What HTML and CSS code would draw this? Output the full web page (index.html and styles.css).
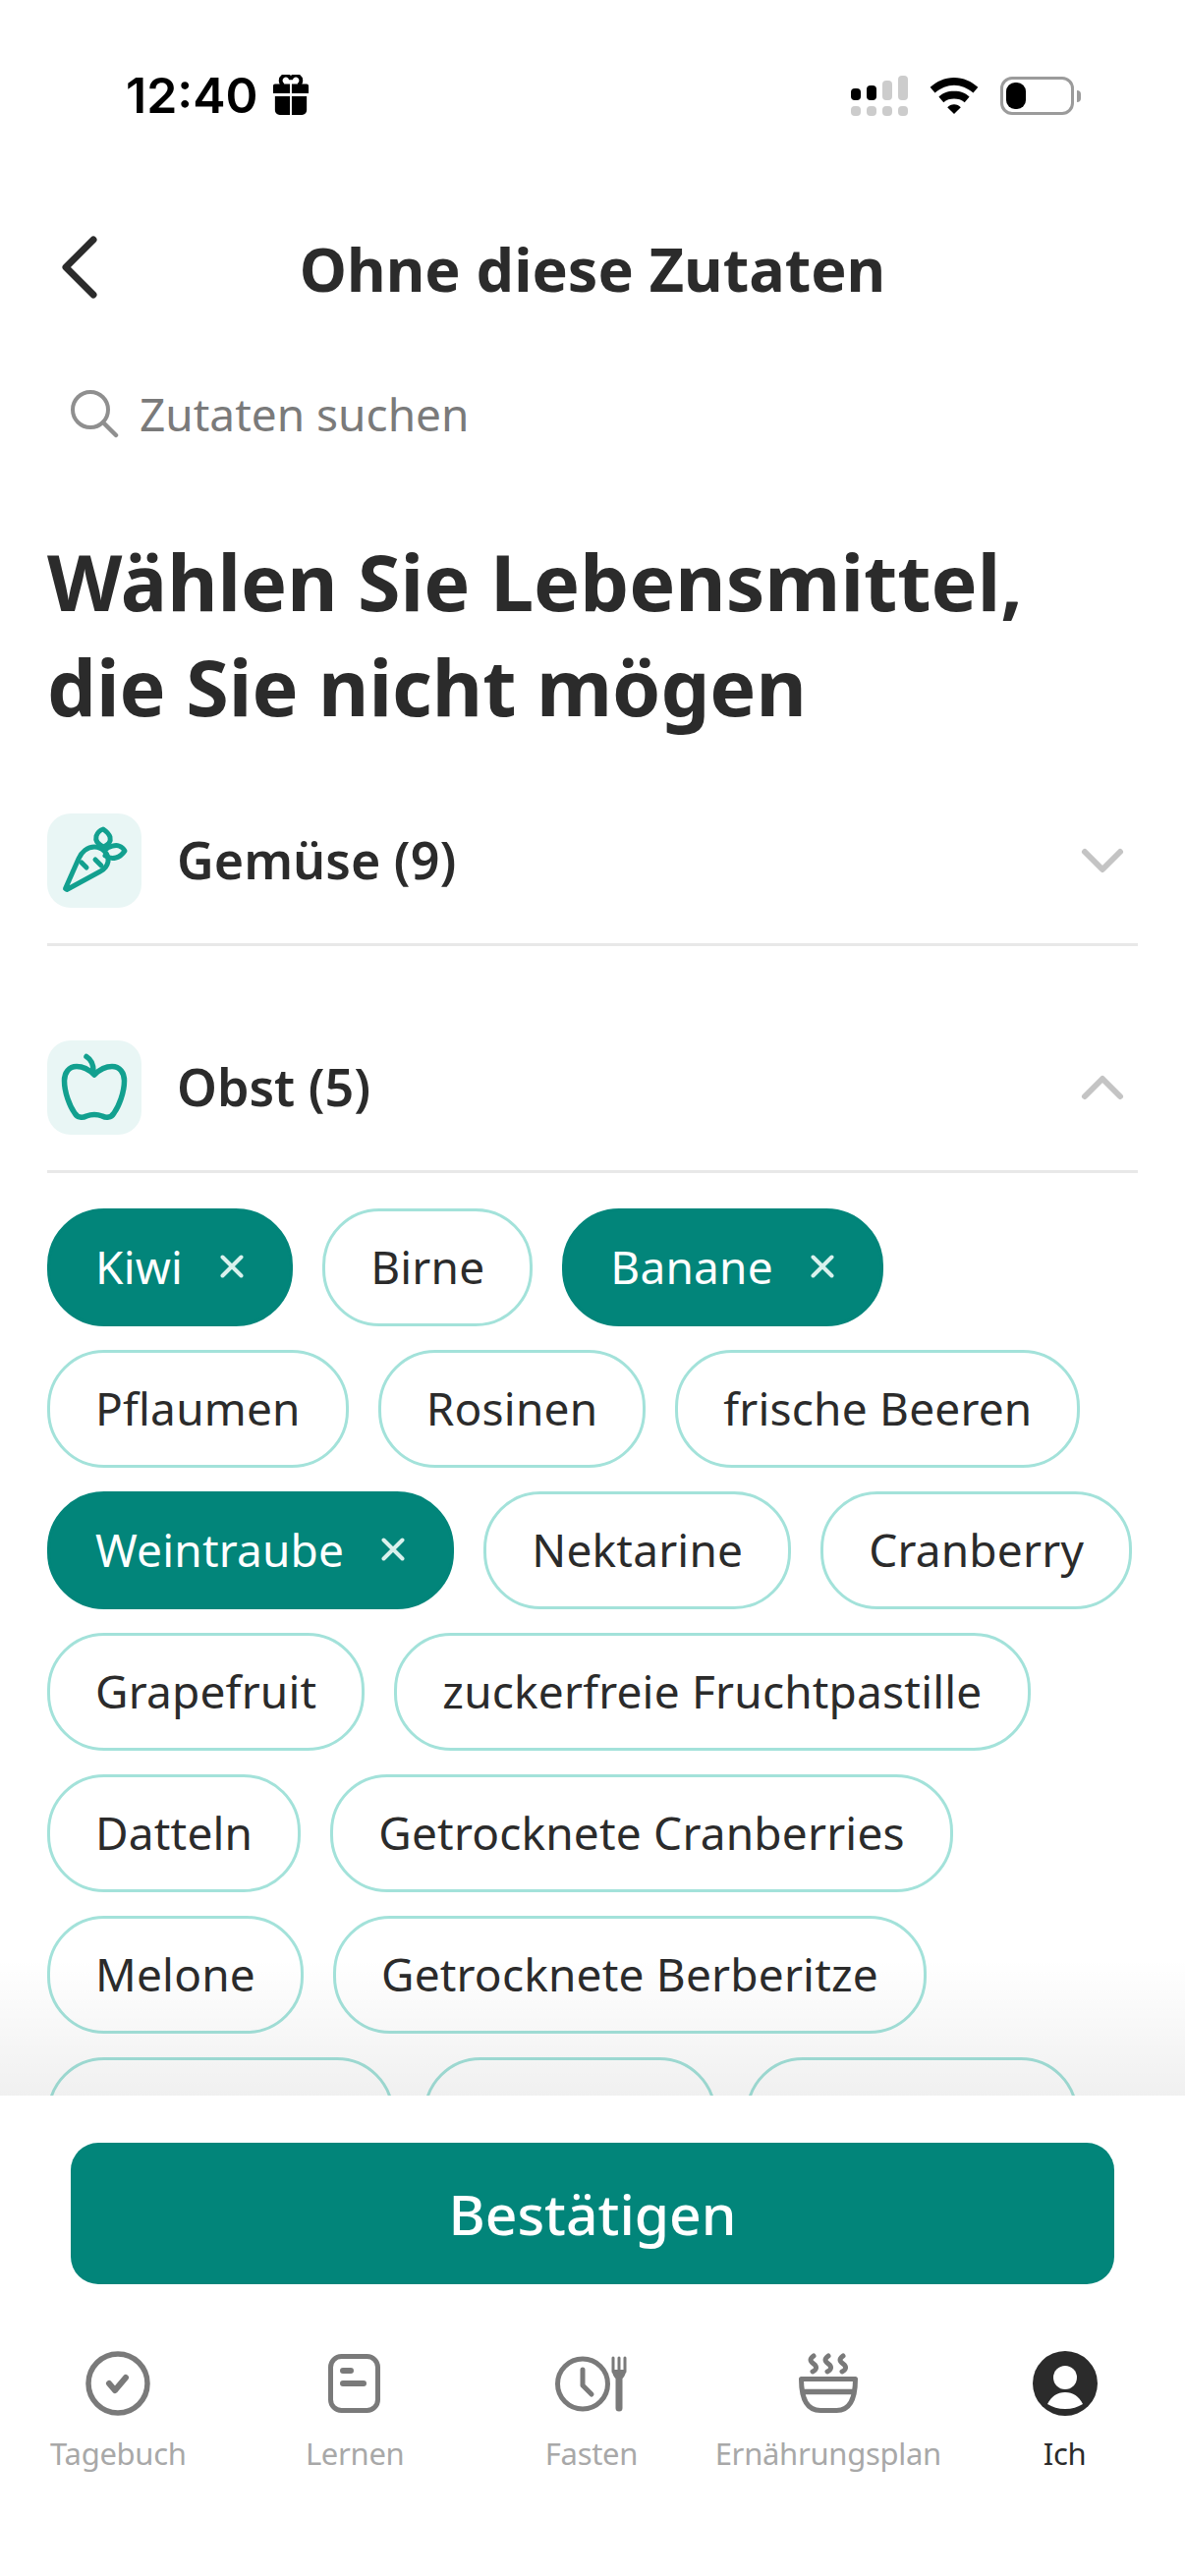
FILE: index.html
```html
<!DOCTYPE html>
<html lang="de">
<head>
    <meta charset="UTF-8">
    <meta name="viewport" content="width=device-width, initial-scale=1.0">
    <title>Ohne diese Zutaten</title>
    <link rel="stylesheet" href="styles.css">
</head>
<body>
    <div class="screen">
        <div class="status-bar">
            <div class="status-left">
                <span class="time">12:40</span>
                <svg class="gift" viewBox="0 0 40 44" width="38" height="42">
                    <path d="M12 11a5.500 5.500 0 1 1 8-6 5.500 5.500 0 1 1 8 6" fill="none" stroke="#000" stroke-width="4"/>
                    <path d="M3 10h16v10H1V12a2 2 0 0 1 2-2zM21 10h16a2 2 0 0 1 2 2v8H21zM3 23h16v20H8a5 5 0 0 1-5-5zM21 23h16v15a5 5 0 0 1-5 5H21z"/>
                </svg>
            </div>
            <div class="status-right">
                <svg viewBox="0 0 58 41" width="58" height="41">
                    <rect x="0" y="13" width="10" height="12" rx="4"/>
                    <rect x="16" y="10" width="10" height="15" rx="4"/>
                    <rect x="32" y="5" width="10" height="20" rx="4" fill="#ccc"/>
                    <rect x="48" y="0" width="10" height="25" rx="4" fill="#ccc"/>
                    <rect x="0" y="31" width="10" height="10" rx="4" fill="#ccc"/>
                    <rect x="16" y="31" width="10" height="10" rx="4" fill="#ccc"/>
                    <rect x="32" y="31" width="10" height="10" rx="4" fill="#ccc"/>
                    <rect x="48" y="31" width="10" height="10" rx="4" fill="#ccc"/>
                </svg>
                <svg viewBox="0 0 50 38" width="50" height="37">
                    <path d="M25 0C15 0 7 4 0 10l5 6c6-5 13-8 20-8s14 3 20 8l5-6C43 4 35 0 25 0z"/>
                    <path d="M25 14c-7 0-12 2-16 6l5 6c3-3 7-4 11-4s8 1 11 4l5-6c-4-4-9-6-16-6z"/>
                    <path d="M25 28c-3 0-5 1-7 3l7 7 7-7c-2-2-4-3-7-3z"/>
                </svg>
                <div class="battery">
                    <div class="battery-body"><div class="battery-level"></div></div>
                    <div class="battery-tip"></div>
                </div>
            </div>
        </div>

        <div class="nav-bar">
            <svg class="back" viewBox="0 0 40 64" width="40" height="64">
                <path d="M35 4 7 32l28 28" fill="none" stroke="#2b2b2b" stroke-width="7" stroke-linecap="round" stroke-linejoin="round"/>
            </svg>
            <h2 class="nav-title">Ohne diese Zutaten</h2>
        </div>

        <div class="search">
            <svg viewBox="0 0 50 50" width="50" height="50">
                <circle cx="21" cy="21" r="18" fill="none" stroke="#8f8f8f" stroke-width="4"/>
                <path d="m34 34 13 13" stroke="#8f8f8f" stroke-width="4.500" stroke-linecap="round"/>
            </svg>
            <span>Zutaten suchen</span>
        </div>

        <div class="content">
            <h1 class="headline">Wählen Sie Lebensmittel,<br>die Sie nicht mögen</h1>

            <div class="category">
                <div class="cat-icon">
                    <svg viewBox="0 0 70 70" width="70" height="70">
                        <g fill="none" stroke="#12a08f" stroke-width="5" stroke-linecap="round" stroke-linejoin="round">
                            <path d="M5.500 63.500 19 33c3-7 9-12 16-12 8 0 15 7 14 15-1 5-4 8-8 10L7 64.500z"/>
                            <path d="M44 21c-6-3-8-7-7-11 1-3 4-6 7-7 3 2 6 5 7 8 1 4-1 8-7 10z"/>
                            <path d="M46 24c4-4 11-5 14-4 3 1 5 3 6 5-2 3-5 6-9 7-4 1-8 0-11-2"/>
                            <path d="m22 37 5 5M36 34l6 6"/>
                        </g>
                    </svg>
                </div>
                <span class="cat-title">Gemüse (9)</span>
                <svg class="chevron" viewBox="0 0 46 28" width="46" height="28">
                    <path d="m5 5 18 18L41 5" fill="none" stroke="#c4c4c4" stroke-width="6" stroke-linecap="round" stroke-linejoin="round"/>
                </svg>
            </div>

            <div class="category open">
                <div class="cat-icon">
                    <svg viewBox="0 0 70 70" width="70" height="70">
                        <g fill="none" stroke="#12a08f" stroke-width="5.500" stroke-linecap="round" stroke-linejoin="round">
                            <path d="M35 22c-5-5-11-8.500-18-8.500-8 0-12.500 6.500-12.500 14.500 0 12 5.500 26 10.500 33 3 5 8 5 12 3 5-2 11-2 16 0 4 2 9 2 12-3 5-7 10.500-21 10.500-33 0-8-4.500-14.500-12.500-14.500-7 0-13 3.500-18 8.500z"/>
                            <path d="M34 18c0-7-3-12-7-14.500"/>
                        </g>
                    </svg>
                </div>
                <span class="cat-title">Obst (5)</span>
                <svg class="chevron" viewBox="0 0 46 28" width="46" height="28">
                    <path d="m5 23 18-18 18 18" fill="none" stroke="#c4c4c4" stroke-width="6" stroke-linecap="round" stroke-linejoin="round"/>
                </svg>
            </div>

            <div class="chips">
                <div class="chip selected">Kiwi
                    <svg class="chip-x" viewBox="0 0 24 24" width="24" height="24"><path d="m2.500 2.500 19 19m0-19-19 19" stroke="#d9f1ed" stroke-width="4" stroke-linecap="round"/></svg>
                </div>
                <div class="chip">Birne</div>
                <div class="chip selected">Banane
                    <svg class="chip-x" viewBox="0 0 24 24" width="24" height="24"><path d="m2.500 2.500 19 19m0-19-19 19" stroke="#d9f1ed" stroke-width="4" stroke-linecap="round"/></svg>
                </div>
                <div class="chip">Pflaumen</div>
                <div class="chip">Rosinen</div>
                <div class="chip">frische Beeren</div>
                <div class="chip selected">Weintraube
                    <svg class="chip-x" viewBox="0 0 24 24" width="24" height="24"><path d="m2.500 2.500 19 19m0-19-19 19" stroke="#d9f1ed" stroke-width="4" stroke-linecap="round"/></svg>
                </div>
                <div class="chip">Nektarine</div>
                <div class="chip">Cranberry</div>
                <div class="chip">Grapefruit</div>
                <div class="chip">zuckerfreie Fruchtpastille</div>
                <div class="chip">Datteln</div>
                <div class="chip">Getrocknete Cranberries</div>
                <div class="chip">Melone</div>
                <div class="chip">Getrocknete Berberitze</div>
                <div class="chip chip-a"></div>
                <div class="chip chip-b"></div>
                <div class="chip chip-c"></div>
            </div>
            <div class="fade"></div>
        </div>

        <div class="bottom">
            <button class="confirm">Bestätigen</button>
            <div class="tabs">
                <div class="tab">
                    <svg viewBox="0 0 66 66" width="66" height="66">
                        <circle cx="33" cy="33" r="30" fill="none" stroke="#7a7a7a" stroke-width="5.500"/>
                        <path d="m24 33 6 7 11-13" fill="none" stroke="#7a7a7a" stroke-width="6" stroke-linecap="round" stroke-linejoin="round"/>
                    </svg>
                    <span>Tagebuch</span>
                </div>
                <div class="tab">
                    <svg viewBox="0 0 66 66" width="66" height="66">
                        <rect x="8.500" y="5.500" width="48" height="55" rx="11" fill="none" stroke="#7a7a7a" stroke-width="5"/>
                        <path d="M21 20h8M21 33h21" stroke="#7a7a7a" stroke-width="6" stroke-linecap="round"/>
                    </svg>
                    <span>Lernen</span>
                </div>
                <div class="tab">
                    <svg viewBox="0 0 76 66" width="76" height="66">
                        <circle cx="29" cy="33.500" r="25.500" fill="none" stroke="#7a7a7a" stroke-width="5"/>
                        <path d="M29 19v16l9 9" fill="none" stroke="#7a7a7a" stroke-width="5" stroke-linecap="round" stroke-linejoin="round"/>
                        <path d="M60 7v14M66 7v14M72 7v14" stroke="#7a7a7a" stroke-width="3" stroke-linecap="round"/>
                        <path d="M59 19h14c0 6-3 10-7 10s-7-4-7-10z" fill="#7a7a7a"/>
                        <path d="M66 26v32" stroke="#7a7a7a" stroke-width="7" stroke-linecap="round"/>
                    </svg>
                    <span>Fasten</span>
                </div>
                <div class="tab">
                    <svg viewBox="0 0 66 66" width="66" height="66">
                        <path d="M18 5c-4 3-4 5 0 8s3 6-1 8M33 5c-4 3-4 5 0 8s3 6-1 8M48 5c-4 3-4 5 0 8s3 6-1 8" fill="none" stroke="#7a7a7a" stroke-width="5" stroke-linecap="round"/>
                        <path d="M5.500 28.500h55c0 16-3 32-19 32H25c-16 0-19.500-16-19.500-32z" fill="none" stroke="#7a7a7a" stroke-width="5" stroke-linejoin="round"/>
                        <path d="M6 41.500h54" stroke="#7a7a7a" stroke-width="5.500"/>
                    </svg>
                    <span>Ernährungsplan</span>
                </div>
                <div class="tab active">
                    <svg viewBox="0 0 66 66" width="66" height="66">
                        <circle cx="33" cy="33" r="33" fill="#2b2b2b"/>
                        <circle cx="33" cy="27" r="12" fill="#fff"/>
                        <path d="M15 54c4-8 10-12 18-12s14 4 18 12c-5 3-11 5-18 5s-13-2-18-5z" fill="#fff"/>
                    </svg>
                    <span>Ich</span>
                </div>
            </div>
        </div>
    </div>
</body>
</html>
```

FILE: styles.css
```css
* {
    box-sizing: border-box;
}

body {
    margin: 0;
    background: #fff;
    font-family: 'Noto Sans', sans-serif;
    color: #2b2b2b;
}

.screen {
    width: 1206px;
    height: 2622px;
    display: flex;
    flex-direction: column;
    overflow: hidden;
}

/* status bar */
.status-bar {
    height: 196px;
    flex-shrink: 0;
    padding: 72px 106px 0 128px;
    display: flex;
    justify-content: space-between;
    align-items: flex-start;
}

.status-left {
    display: flex;
    align-items: center;
    gap: 14px;
}

.time {
    font-family: 'Inter', sans-serif;
    font-size: 50px;
    font-weight: 600;
    color: #000;
    line-height: 50px;
}

.status-right {
    display: flex;
    align-items: center;
    gap: 22px;
    margin-top: 5px;
}

.battery {
    display: flex;
    align-items: center;
    gap: 3px;
}

.battery-body {
    width: 75px;
    height: 39px;
    border: 3px solid #9b9b9b;
    border-radius: 12px;
    padding: 3px;
}

.battery-level {
    width: 20px;
    height: 100%;
    background: #000;
    border-radius: 9px;
}

.battery-tip {
    width: 4px;
    height: 12px;
    background: #9b9b9b;
    border-radius: 0 6px 6px 0;
}

/* header */
.nav-bar {
    height: 154px;
    flex-shrink: 0;
    display: flex;
    align-items: center;
    justify-content: center;
    position: relative;
}

.back {
    position: absolute;
    left: 60px;
    top: 44px;
}

.nav-title {
    margin: 0;
    font-size: 61px;
    font-weight: 700;
}

.search {
    height: 96px;
    flex-shrink: 0;
    margin-top: 23px;
    padding-left: 71px;
    display: flex;
    align-items: center;
    gap: 21px;
    font-size: 46px;
    color: #7a7a7a;
}

.content {
    flex: 1;
    min-height: 0;
    padding: 0 48px;
    position: relative;
    overflow: hidden;
}

.headline {
    margin: 69px 0 76px;
    font-size: 79px;
    line-height: 107px;
    font-weight: 700;
}

/* categories */
.category {
    height: 135px;
    margin-bottom: 96px;
    padding-bottom: 36px;
    display: flex;
    align-items: center;
    border-bottom: 3px solid #e8e8e8;
}

.category.open {
    margin-bottom: 36px;
}

.cat-icon {
    width: 96px;
    height: 96px;
    border-radius: 24px;
    background: #e9f6f5;
    display: flex;
    align-items: center;
    justify-content: center;
    margin-right: 36px;
}

.cat-title {
    font-size: 52px;
    font-weight: 600;
    flex: 1;
    margin-bottom: 4px;
}

.chevron {
    margin-right: 13px;
}

/* chips */
.chips {
    display: flex;
    flex-wrap: wrap;
    gap: 24px 30px;
}

.chip {
    height: 120px;
    padding: 0 46px 2px;
    border: 3px solid #a3e2da;
    border-radius: 58px;
    display: flex;
    align-items: center;
    font-size: 46px;
    letter-spacing: 0.2px;
    background: #fff;
}

.chip.selected {
    padding-right: 47px;
    background: #02857a;
    border-color: #02857a;
    color: #fff;
}

.chip-x {
    margin-left: 38px;
}

.chip-a {
    width: 353px;
}

.chip-b {
    width: 298px;
}

.chip-c {
    width: 338px;
}

.fade {
    position: absolute;
    left: 0;
    right: 0;
    bottom: 0;
    height: 140px;
    background: linear-gradient(rgba(0, 0, 0, 0), rgba(0, 0, 0, 0.06));
}

/* bottom panel */
.bottom {
    height: 489px;
    flex-shrink: 0;
    background: #fff;
    padding-top: 48px;
}

.confirm {
    display: block;
    width: 1062px;
    height: 144px;
    margin: 0 auto;
    background: #02857a;
    color: #fff;
    border: none;
    border-radius: 28px;
    font-family: 'Noto Sans', sans-serif;
    font-size: 57px;
    font-weight: 500;
}

.tabs {
    display: grid;
    grid-template-columns: repeat(5, minmax(0, 1fr));
    margin-top: 68px;
    padding-right: 2px;
}

.tab {
    display: flex;
    flex-direction: column;
    align-items: center;
    gap: 17px;
    font-size: 31px;
    letter-spacing: -0.3px;
    color: #a8a8a8;
}

.tab.active {
    color: #2b2b2b;
}
```
